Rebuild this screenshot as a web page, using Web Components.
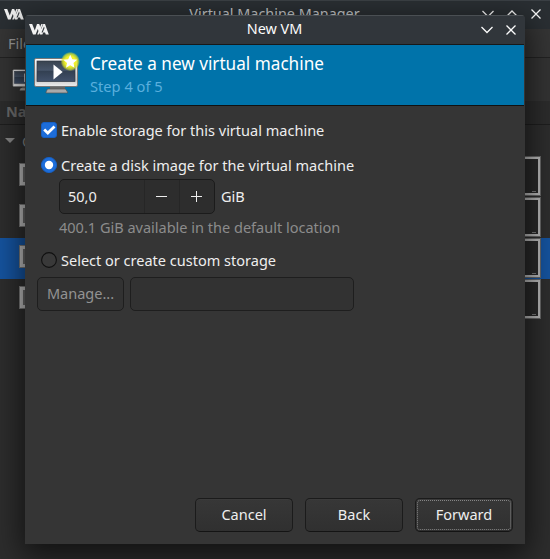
<!DOCTYPE html>
<html lang="en"><head><meta charset="utf-8"><title>New VM</title>
<style>
html,body{margin:0;height:100%;overflow:hidden;background:#2d2d2d}
body{font:14.53px/20px "Noto Sans",sans-serif;color:#eee;position:relative}
</style></head><body>
<manager-window></manager-window>
<vm-dialog></vm-dialog>
<script>
const define=(name,html,setup)=>customElements.define(name,class extends HTMLElement{
  constructor(){super();this.attachShadow({mode:'open'}).innerHTML='<style>*{box-sizing:border-box}</style>'+html;}
  connectedCallback(){if(setup)setup(this,this.shadowRoot);}
});

define('vm-logo',`<style>:host{display:block;width:20px;height:11px}svg{display:block}</style>
<svg width="20" height="11" viewBox="0 0 20 11" fill="#f2f2f2"><path d="M0 0H3.2L5.8 6.4L8 0H10.2L12.2 5L14.3 0H16L19.8 10.4H16.8L16 8.6H14.2L13.4 10.4H10.9L8.8 5L6.6 10.4H4z"/><path d="M8.2 10.4L12.3 0h1.5L9.9 10.4z"/><path d="M12.5 8.4L15 2.6l.5 1.5-1.8 4.3z" fill="#31363b"/></svg>`);

define('window-glyph',`<style>:host{display:block;width:12px;height:12px}svg{display:block}</style>
<svg width="12" height="12" viewBox="0 0 12 12" fill="none" stroke="#fcfcfc" stroke-width="1.25"><path/></svg>`,(h,r)=>{
 r.querySelector('path').setAttribute('d',{down:'M.5 3L6 8.5L11.5 3',up:'M.5 8.5L6 3L11.5 8.5',close:'M1.5 1.5L10.5 10.5M10.5 1.5L1.5 10.5'}[h.getAttribute('kind')]);
});

define('title-bar',`<style>:host{display:grid;grid-template-columns:80px 1fr 80px;align-items:center;height:29px;box-sizing:border-box}
.title{text-align:center;white-space:nowrap;font-size:14.4px;line-height:20px;padding:0 1px 2px 0}vm-logo{margin-left:4px;margin-top:-1px}.controls{display:flex;justify-content:flex-end;gap:12px;padding:0 8px 1px 0}</style>
<vm-logo></vm-logo><div class="title"><slot></slot></div><div class="controls"><slot name="controls"></slot></div>`);

define('monitor-icon',`<style>:host{display:block;width:50px;height:46px}svg{display:block;width:100%;height:100%}</style>
<svg viewBox="0 0 50 46"><defs><linearGradient id="f" x2="0" y2="1"><stop stop-color="#fafafa"/><stop offset=".75" stop-color="#c9c9c9"/><stop offset="1" stop-color="#eee"/></linearGradient><linearGradient id="s" x2="0" y2="1"><stop stop-color="#39434f"/><stop offset=".45" stop-color="#47556a"/><stop offset=".5" stop-color="#334052"/><stop offset="1" stop-color="#42516b"/></linearGradient><radialGradient id="g"><stop stop-color="#f4f42a"/><stop offset=".55" stop-color="#f0f02a"/><stop offset=".8" stop-color="#d9e42a" stop-opacity=".75"/><stop offset="1" stop-color="#d9e42a" stop-opacity="0"/></radialGradient></defs>
<path d="M17 35h15v4H17z" fill="#666"/><path d="M14.5 38h18l2 3v1H13v-1z" fill="#aaa" stroke="#555" stroke-width=".7"/>
<rect x="1.5" y="7.5" width="43" height="28" rx="1.5" fill="url(#f)" stroke="#777"/><rect x="4" y="10" width="38" height="20.5" fill="url(#s)" stroke="#303844" stroke-width=".7"/>
<path d="M20.5 13.5L29.7 21L20.5 28.5z" fill="#fff"/><circle cx="37.3" cy="10.5" r="9.7" fill="url(#g)"/><path d="M37.2 3.8l2.1 4.4 4.8.5-3.6 3.3 1 4.7-4.3-2.4-4.2 2.4 1-4.7-3.6-3.3 4.8-.5z" fill="#fff"/></svg>`);

define('tool-button',`<style>:host{display:flex;align-items:center;justify-content:center;height:34px;min-width:98px;border:1px solid #1b1b1b;border-bottom-color:#141414;border-radius:5px;background:linear-gradient(#373737,#303030);box-shadow:inset 0 1px #3b3b3b;box-sizing:border-box;position:relative;padding-bottom:2px}
:host([disabled]){min-width:87px;color:#929292;background:#323232;border-color:#1e1e1e;box-shadow:none}
:host([focused])::after{content:"";position:absolute;inset:1px;border:1px dotted #858585;border-radius:3px}</style><slot></slot>`);

define('choice-row',`<style>:host{display:flex;align-items:center;height:20px;gap:3px;white-space:nowrap}.mark{width:17px;height:17px;display:block}svg{display:block}</style>
<span class="mark"></span><span><slot></slot></span>`,(h,r)=>{
 const k=h.getAttribute('kind');
 r.querySelector('.mark').innerHTML='<svg width="17" height="17" viewBox="0 0 17 17">'+({
 check:'<rect x=".5" y=".5" width="15" height="15" rx="2.5" fill="#1d6dd9" stroke="#175fc1"/><path d="M3.2 7.6L6.8 11L13.5 4.6" fill="none" stroke="#fff" stroke-width="2.8"/>',
 on:'<circle cx="8" cy="8" r="7.6" fill="#1d6dd9" stroke="#175fc1"/><circle cx="8" cy="8" r="4.2" fill="#fff"/>',
 off:'<circle cx="8" cy="8" r="7.4" fill="#393939" stroke="#101010" stroke-width="1.1"/>'}[k])+'</svg>';
});

define('spin-entry',`<style>:host{display:grid;grid-template-columns:84px 35px 1fr;width:156px;height:35px;border:1px solid #1b1b1b;border-radius:5px;background:#2d2d2d;box-sizing:border-box}
span{display:flex;align-items:center;padding:0 0 2px 8px}i{display:flex;align-items:center;justify-content:center;border-left:1px solid #262626;padding-right:2px}svg{display:block}</style>
<span><slot></slot></span><i><svg width="13" height="13"><path d="M1 6.5h11" stroke="#eee"/></svg></i><i><svg width="13" height="13"><path d="M1 6.5h11M6.5 1v11" stroke="#eee"/></svg></i>`);

define('machine-row',`<style>:host{display:flex;justify-content:space-between;height:41px;padding:1px 10px 0 19px;box-sizing:border-box}:host([selected]){background:#15539e}
.thumb{width:40px;height:23px;margin-top:6px;border:4px solid #bbb;outline:1px solid #777;outline-offset:-1px;background:#666}
.graph{width:80px;height:38px;border:1px solid #b8b8b8;border-width:2px;outline:1px solid #666;background:#292929;display:flex;justify-content:flex-end;align-items:flex-end;padding:0 2px 1px}.graph b{width:4px;height:1px;background:#777}</style>
<div class="thumb"></div><div class="graph"><b></b></div>`);

define('manager-window',`<style>:host{display:flex;flex-direction:column;height:559px;width:550px;overflow:hidden;background:#2d2d2d}
title-bar{height:29px;background:linear-gradient(#3b4045 0,#3b4045 1px,#2a2f33 1px,#2a2f33);color:#c5c8ca}
.menu{height:29px;background:#353535;border-bottom:1px solid #222;padding:4px 8px;color:#999}
.tools{height:43px;background:#333;padding:7px 12px}.tools monitor-icon{width:30px;height:28px}
.head{height:24px;background:#2c2c2c;border-bottom:1px solid #1e1e1e;padding:0 6px;font-weight:700;color:#696969}
.group{height:31px;display:flex;align-items:center;gap:7px;padding-left:5px;color:#888}.group svg{display:block}</style>
<title-bar>Virtual Machine Manager<window-glyph slot="controls" kind="down"></window-glyph><window-glyph slot="controls" kind="up"></window-glyph><window-glyph slot="controls" kind="close"></window-glyph></title-bar>
<div class="menu">File</div><div class="tools"><monitor-icon></monitor-icon></div><div class="head">Name</div>
<div class="group"><svg width="10" height="5"><path d="M0 0h10L5 5z" fill="#858585"/></svg>QEMU</div>
<machine-row></machine-row><machine-row></machine-row><machine-row selected></machine-row><machine-row></machine-row>`);

define('vm-dialog',`<style>:host{position:absolute;left:25px;top:15px;width:500px;height:529px;display:flex;flex-direction:column;background:#353535;border-radius:4px 4px 0 0;box-shadow:0 9px 30px 3px rgba(0,0,0,.62);overflow:hidden}
title-bar{background:#31363b;border-top:1px solid #4a4f53;color:#fcfcfc;height:29px}
.banner{height:62px;margin:0 1px;border-top:1px solid #181818;border-bottom:1px solid #111;background:#0073aa;display:flex;gap:7px;padding:6px 0 0 7px}
.banner h1{font-size:17.16px;line-height:24px;font-weight:400;margin:1px 0 0;color:#fff}.banner p{margin:0;font-size:14.667px;line-height:20px;color:#5aafdd}
.body{flex:1;display:flex;flex-direction:column;padding:14px 12px 12px}
.size{display:flex;align-items:center;gap:6px;padding-left:22px;height:35px;margin-top:4px}.size>span{padding-bottom:2px}
.hint{padding-left:22px;margin-top:3px;height:20px;color:#8c8c8c}.custom{display:flex;gap:6px;margin-top:7px}.entry{width:224px;height:34px;border:1px solid #1e1e1e;border-radius:5px;background:#323232}
.actions{margin-top:auto;display:flex;gap:12px;justify-content:flex-end}
choice-row{padding-left:4px}</style>
<title-bar>New VM<window-glyph slot="controls" kind="down"></window-glyph><window-glyph slot="controls" kind="close"></window-glyph></title-bar>
<div class="banner"><monitor-icon></monitor-icon><div><h1>Create a new virtual machine</h1><p>Step 4 of 5</p></div></div>
<div class="body"><choice-row kind="check">Enable storage for this virtual machine</choice-row>
<choice-row kind="on" style="margin-top:15px">Create a disk image for the virtual machine</choice-row>
<div class="size"><spin-entry>50,0</spin-entry><span>GiB</span></div><div class="hint">400.1 GiB available in the default location</div>
<choice-row kind="off" style="margin-top:13px">Select or create custom storage</choice-row>
<div class="custom"><tool-button disabled>Manage...</tool-button><div class="entry"></div></div>
<div class="actions"><tool-button>Cancel</tool-button><tool-button>Back</tool-button><tool-button focused>Forward</tool-button></div></div>`);
</script></body></html>
